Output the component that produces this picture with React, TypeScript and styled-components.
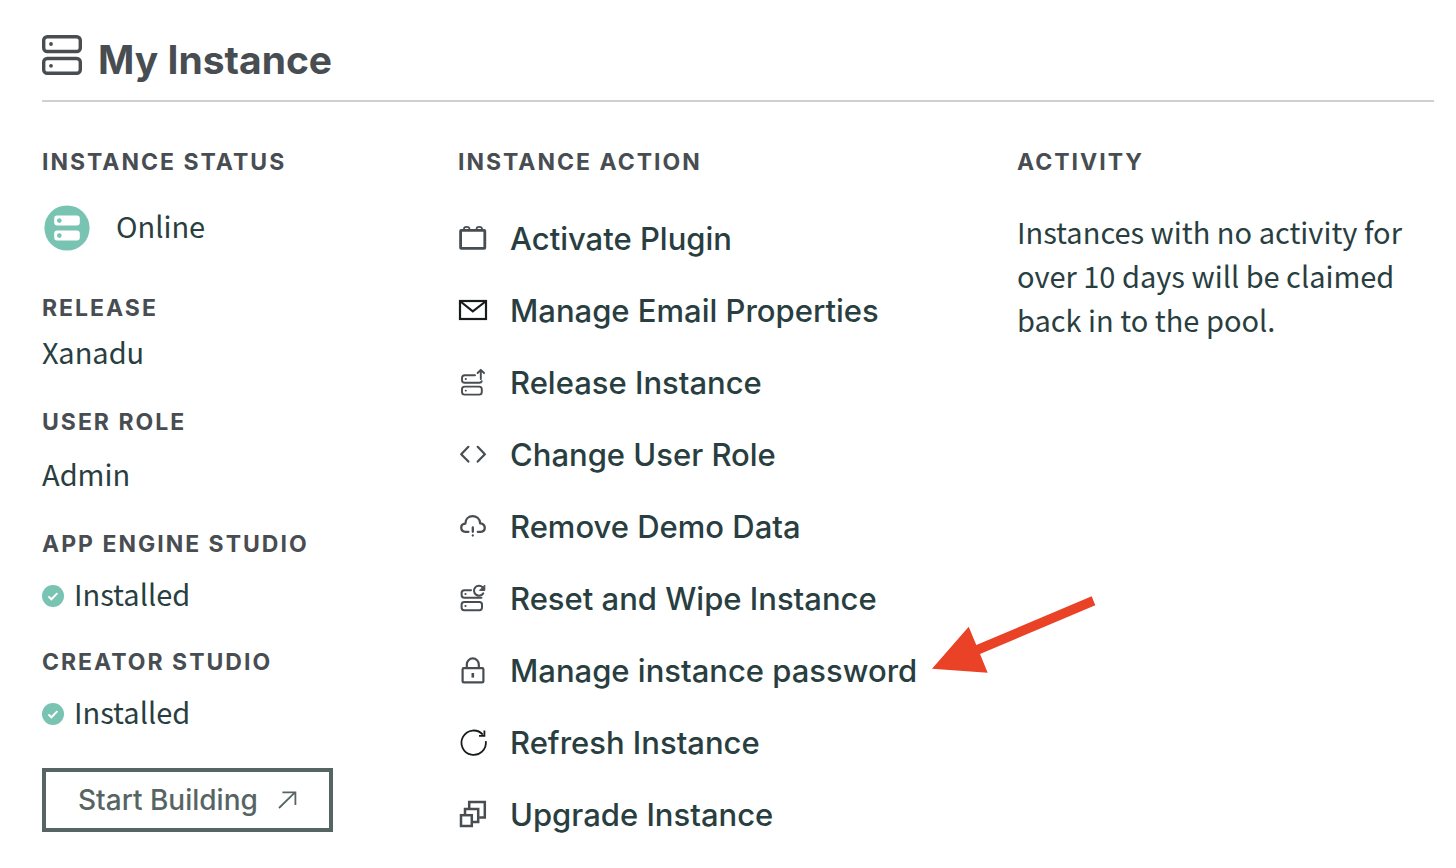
import React from "react";
import styled, { createGlobalStyle } from "styled-components";

const GlobalStyle = createGlobalStyle`
  *, *::before, *::after { box-sizing: border-box; }
  body { margin: 0; background: #fff; }
`;

const display = `Inter, "Liberation Sans", sans-serif`;
const text = `"Noto Sans CJK SC", "Open Sans", sans-serif`;

const Page = styled.main`
  padding: 32px 22px 16px 42px;
  color: #293e40;
  font-family: ${text};
`;

const Header = styled.header`
  display: flex;
  align-items: flex-start;
  gap: 16px;
  padding: 3px 0 15px;
  border-bottom: 2px solid #d0d0d0;
`;

const Title = styled.h1`
  margin: 0;
  color: #484d52;
  font: 700 39px/50px ${display};
`;

const Columns = styled.div`
  display: grid;
  grid-template-columns: 416fr 559fr 417fr;
  padding-top: 44px;
`;

const Column = styled.section`
  min-width: 0;
`;

const Label = styled.h2`
  margin: 0;
  color: #484d52;
  font: 700 23px/32px ${display};
  letter-spacing: 2px;
  text-transform: uppercase;
`;

const Field = styled.div<{ $gap: number; $after: number }>`
  display: flex;
  flex-direction: column;
  gap: ${(p) => p.$gap}px;
  margin-bottom: ${(p) => p.$after}px;
`;

const Value = styled.div<{ $gap?: number }>`
  display: flex;
  align-items: center;
  gap: ${(p) => p.$gap ?? 0}px;
  height: 44px;
  font-size: 29px;
  line-height: 38px;
`;

const ValueText = styled.span`
  padding-bottom: 6px;
`;

const BuildButton = styled.button`
  display: flex;
  align-items: center;
  gap: 20px;
  height: 64px;
  padding: 0 32px;
  border: 4px solid #566564;
  background: #fff;
  color: #566564;
  font: 500 28px/32px ${display};
  cursor: pointer;
`;

const Actions = styled.ul`
  margin: 0;
  padding: 25px 0 0;
  list-style: none;
`;

const Action = styled.li`
  position: relative;
  display: flex;
  align-items: center;
  height: 72px;
`;

const ActionLink = styled.a`
  display: flex;
  align-items: center;
  gap: 22px;
  color: #293e40;
  font: 500 31px/40px ${display};
  text-decoration: none;
  white-space: nowrap;
`;

const Pointer = styled.svg`
  position: absolute;
  top: -39px;
  left: 474px;
`;

const Note = styled.p`
  margin: 31px 0 0;
  font-size: 29px;
  line-height: 44px;
`;

const Glyph = styled.svg`
  flex: none;
  fill: none;
  stroke: #484d52;
  stroke-width: 2.2;
`;

const icons = {
  plugin: (
    <g strokeWidth="2.8">
      <rect x="2.6" y="6.3" width="24.2" height="18" rx="0.6" />
      <path d="M6 5.6V4.8q0-2 2.7-2t2.7 2v.8M18.6 5.6V4.8q0-2 2.7-2t2.7 2v.8" strokeWidth="1.8" />
    </g>
  ),
  mail: (
    <g stroke="#161b1c">
      <rect x="2" y="5" width="26" height="18" />
      <path d="M2.5 5.5 14.8 15.4 27.5 5.5" />
    </g>
  ),
  release: (
    <g strokeWidth="1.9" strokeLinecap="round" strokeLinejoin="round">
      <path d="M17 7.2H6.8Q4 7.2 4 10v2q0 2.8 2.8 2.8h14.4q2.2 0 2.5-1.6" />
      <rect x="4" y="18.6" width="19.8" height="8" rx="2.6" />
      <path d="M22.8 11V2M19.6 5l3.2-3.2L26 5" />
      <path d="M7.7 11h.2M7.7 22.6h.2" />
    </g>
  ),
  code: (
    <path d="M10.4 6.8 3.2 14.2l7.2 7.4M19.7 6.8l7.2 7.4-7.2 7.4" strokeLinecap="round" strokeLinejoin="round" />
  ),
  cloud: (
    <g strokeLinecap="round" strokeLinejoin="round" strokeWidth="2.3">
      <path d="M10.4 19.8H7.6C1.8 19.4 1.8 12 7.4 11.6 7.6 1.6 21.4 1.8 22.2 11.4c6 .8 6 7.8.4 8.4h-2.8" />
      <path d="M14.8 15.4v4.4M14.8 23.5v.1" />
    </g>
  ),
  reset: (
    <g strokeWidth="2" strokeLinecap="round" strokeLinejoin="round">
      <path d="M13 6.2H6.4Q3.6 6.2 3.6 9v2q0 2.8 2.8 2.8h17" />
      <rect x="3.6" y="18" width="20.4" height="8.2" rx="2.6" />
      <path d="M25.2 9.4A5 5 0 1 1 24.6 3.2" />
      <path d="M26.8 1.4v5h-5z" fill="#484d52" strokeWidth="1" />
      <path d="M7.4 10h.2M7.4 22h.2" />
    </g>
  ),
  lock: (
    <g>
      <rect x="4.6" y="12.2" width="20.8" height="14.2" rx="1.2" />
      <path d="M8.8 12V8.4a6 6 0 0 1 12 0V12" />
      <path d="M14.8 17v4.6" strokeWidth="2.6" />
    </g>
  ),
  refresh: (
    <g stroke="#161b1c" strokeWidth="1.8">
      <path d="M27.8 13.2A12.2 12.2 0 1 1 24.8 6.6" />
      <path d="M26.4 2.4v5.4h-5.4" />
    </g>
  ),
  upgrade: (
    <g strokeWidth="2.5">
      <path d="M11.2 8V2h15.6v15.6h-5.6" />
      <path d="M7 14.2V9h13.2v13H14.6" />
      <rect x="3" y="15.2" width="10.8" height="10.8" />
    </g>
  ),
};

type IconName = keyof typeof icons;

const actions: { icon: IconName; label: string; highlighted?: boolean }[] = [
  { icon: "plugin", label: "Activate Plugin" },
  { icon: "mail", label: "Manage Email Properties" },
  { icon: "release", label: "Release Instance" },
  { icon: "code", label: "Change User Role" },
  { icon: "cloud", label: "Remove Demo Data" },
  { icon: "reset", label: "Reset and Wipe Instance" },
  { icon: "lock", label: "Manage instance password", highlighted: true },
  { icon: "refresh", label: "Refresh Instance" },
  { icon: "upgrade", label: "Upgrade Instance" },
];

const ServerIcon = () => (
  <Glyph width="40" height="40" viewBox="0 0 40 40" aria-hidden="true">
    <rect x="1.7" y="1.7" width="36.6" height="14.8" rx="3.6" strokeWidth="3.4" />
    <rect x="1.7" y="23.5" width="36.6" height="14.8" rx="3.6" strokeWidth="3.4" />
    <circle cx="9" cy="9" r="1.9" fill="#484d52" stroke="none" />
    <circle cx="9" cy="30.8" r="1.9" fill="#484d52" stroke="none" />
  </Glyph>
);

const OnlineIcon = () => (
  <svg width="50" height="46" viewBox="0 0 50 46" aria-hidden="true">
    <circle cx="25" cy="23" r="22.6" fill="#78c3b2" />
    <rect x="12.2" y="10.6" width="25.6" height="10" rx="3" fill="#fff" />
    <rect x="12.2" y="25.6" width="25.6" height="10" rx="3" fill="#fff" />
    <circle cx="17.3" cy="15.6" r="2.3" fill="#78c3b2" />
    <circle cx="17.3" cy="30.6" r="2.3" fill="#78c3b2" />
  </svg>
);

const CheckIcon = () => (
  <svg width="22" height="22" viewBox="0 0 22 22" aria-hidden="true">
    <circle cx="11" cy="11" r="11" fill="#78c3b2" />
    <path d="m6.4 11.4 3 2.9 6-6.2" fill="none" stroke="#fff" strokeWidth="2" />
  </svg>
);

export default function App() {
  return (
    <>
      <GlobalStyle />
      <Page>
        <Header>
          <ServerIcon />
          <Title>My Instance</Title>
        </Header>
        <Columns>
          <Column>
            <Field $gap={28} $after={42}>
              <Label>Instance Status</Label>
              <Value $gap={24}>
                <OnlineIcon />
                <ValueText>Online</ValueText>
              </Value>
            </Field>
            <Field $gap={8} $after={30}>
              <Label>Release</Label>
              <Value>
                <ValueText>Xanadu</ValueText>
              </Value>
            </Field>
            <Field $gap={16} $after={30}>
              <Label>User Role</Label>
              <Value>
                <ValueText>Admin</ValueText>
              </Value>
            </Field>
            <Field $gap={14} $after={28}>
              <Label>App Engine Studio</Label>
              <Value $gap={10}>
                <CheckIcon />
                <ValueText>Installed</ValueText>
              </Value>
            </Field>
            <Field $gap={14} $after={32}>
              <Label>Creator Studio</Label>
              <Value $gap={10}>
                <CheckIcon />
                <ValueText>Installed</ValueText>
              </Value>
            </Field>
            <BuildButton type="button">
              Start Building
              <Glyph width="19" height="18" viewBox="0 0 19 18" aria-hidden="true">
                <path d="M1 17 17 1.4M4.4 1.4H17.4V14" stroke="#566564" strokeWidth="1.8" />
              </Glyph>
            </BuildButton>
          </Column>
          <Column>
            <Label>Instance Action</Label>
            <Actions>
              {actions.map((action) => (
                <Action key={action.label}>
                  <ActionLink href="#">
                    <Glyph width="30" height="30" viewBox="0 0 30 30" aria-hidden="true">
                      {icons[action.icon]}
                    </Glyph>
                    {action.label}
                  </ActionLink>
                  {action.highlighted && (
                    <Pointer width="164" height="77" viewBox="0 0 164 77" aria-hidden="true">
                      <path
                        d="M0 72.7 36.7 30.7 44.3 49 159.7.3l3.6 9L48 58l7.7 18.7z"
                        fill="#ea4227"
                      />
                    </Pointer>
                  )}
                </Action>
              ))}
            </Actions>
          </Column>
          <Column>
            <Label>Activity</Label>
            <Note>Instances with no activity for over 10 days will be claimed back in to the pool.</Note>
          </Column>
        </Columns>
      </Page>
    </>
  );
}
